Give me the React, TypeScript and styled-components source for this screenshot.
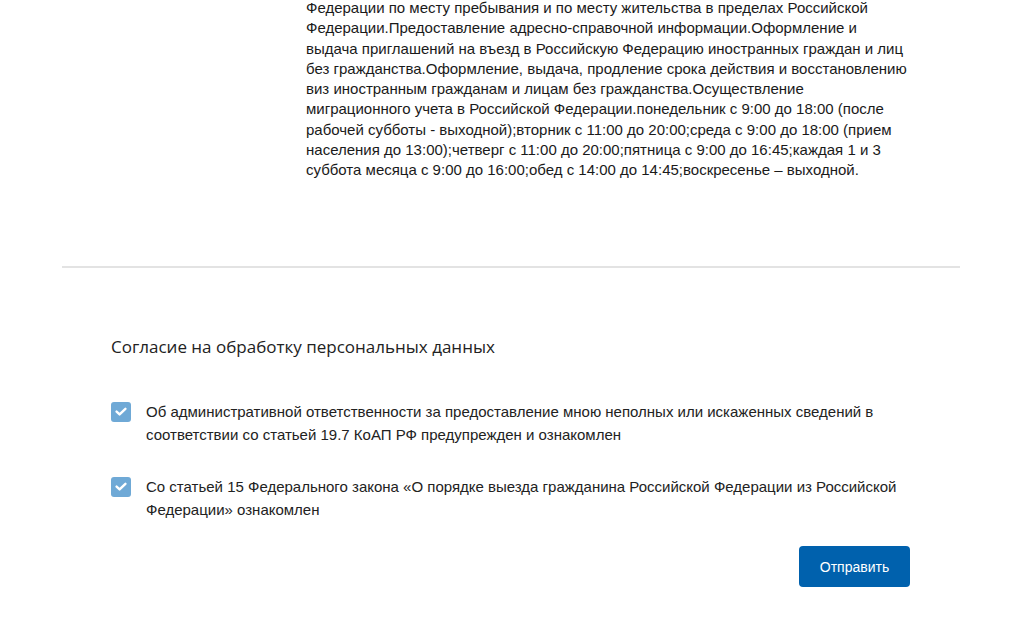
import React from "react";
import styled, { createGlobalStyle } from "styled-components";

const Global = createGlobalStyle`
  html, body { margin: 0; padding: 0; background: #fff; }
  body { font-family: "Liberation Sans", Arial, sans-serif; color: #222; overflow: hidden; }
`;

const Page = styled.div`
  width: 1024px;
  height: 639px;
  overflow: hidden;
`;

const Container = styled.div`
  margin-left: 62px;
  width: 898px;
`;

const Info = styled.p`
  margin: -2px 0 0 244px;
  font-size: 15px;
  line-height: 20.25px;
  color: #1a1a1a;
  white-space: nowrap;
`;

const Divider = styled.hr`
  margin: 86px 0 0;
  border: 0;
  border-top: 2px solid #e3e3e3;
  height: 0;
`;

const Section = styled.section`
  padding: 0 50px 0 49px;
  display: flex;
  flex-direction: column;
`;

const Heading = styled.h2`
  margin: 67px 0 0;
  font-family: "Open Sans", "Noto Sans", sans-serif;
  font-weight: 400;
  font-size: 17px;
  line-height: 24px;
  color: #222;
`;

const List = styled.div`
  margin-top: 42px;
  display: flex;
  flex-direction: column;
  gap: 30px;
`;

const Row = styled.label`
  display: flex;
  align-items: flex-start;
  gap: 15px;
`;

const Box = styled.span`
  flex: none;
  width: 20px;
  height: 20px;
  margin-top: 1px;
  border-radius: 3px;
  background: #6fa9d6;
  display: flex;
  align-items: center;
  justify-content: center;
`;

const LabelText = styled.span`
  font-size: 15px;
  line-height: 22.5px;
  color: #222;
  white-space: nowrap;
`;

const Actions = styled.div`
  display: flex;
  justify-content: flex-end;
  margin-top: 25px;
`;

const Button = styled.button`
  width: 111px;
  height: 41px;
  border: 0;
  border-radius: 4px;
  background: #0061ad;
  color: #fff;
  font-family: "Liberation Sans", Arial, sans-serif;
  font-size: 14px;
  cursor: pointer;
`;

const Check = () => (
  <svg width="12" height="10" viewBox="0 0 12 10" fill="none">
    <path d="M1.6 4.6 L4.6 7.4 L10.4 1.8" stroke="#fff" strokeWidth="2.4" strokeLinecap="round" strokeLinejoin="round" />
  </svg>
);

const infoLines = [
  "Федерации по месту пребывания и по месту жительства в пределах Российской",
  "Федерации.Предоставление адресно-справочной информации.Оформление и",
  "выдача приглашений на въезд в Российскую Федерацию иностранных граждан и лиц",
  "без гражданства.Оформление, выдача, продление срока действия и восстановлению",
  "виз иностранным гражданам и лицам без гражданства.Осуществление",
  "миграционного учета в Российской Федерации.понедельник с 9:00 до 18:00 (после",
  "рабочей субботы - выходной);вторник с 11:00 до 20:00;среда с 9:00 до 18:00 (прием",
  "населения до 13:00);четверг с 11:00 до 20:00;пятница с 9:00 до 16:45;каждая 1 и 3",
  "суббота месяца с 9:00 до 16:00;обед с 14:00 до 14:45;воскресенье – выходной.",
];

const consents = [
  [
    "Об административной ответственности за предоставление мною неполных или искаженных сведений в",
    "соответствии со статьей 19.7 КоАП РФ предупрежден и ознакомлен",
  ],
  [
    "Со статьей 15 Федерального закона «О порядке выезда гражданина Российской Федерации из Российской",
    "Федерации» ознакомлен",
  ],
];

export default function App() {
  return (
    <Page>
      <Global />
      <Container>
        <Info>
          {infoLines.map((l, i) => (
            <React.Fragment key={i}>
              {l}
              {i < infoLines.length - 1 && <br />}
            </React.Fragment>
          ))}
        </Info>
        <Divider />
        <Section>
          <Heading>Согласие на обработку персональных данных</Heading>
          <List>
            {consents.map((c, i) => (
              <Row key={i}>
                <Box>
                  <Check />
                </Box>
                <LabelText>
                  {c[0]}
                  <br />
                  {c[1]}
                </LabelText>
              </Row>
            ))}
          </List>
          <Actions>
            <Button>Отправить</Button>
          </Actions>
        </Section>
      </Container>
    </Page>
  );
}
